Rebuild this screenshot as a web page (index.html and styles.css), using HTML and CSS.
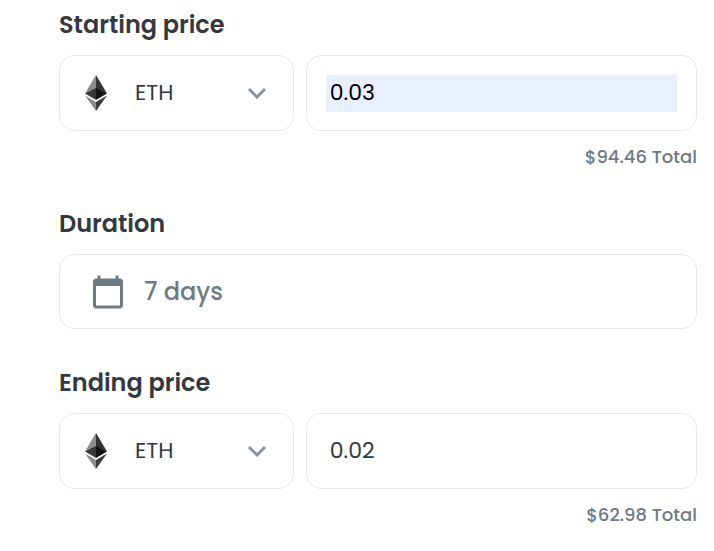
FILE: index.html
```html
<!DOCTYPE html>
<html lang="en">
<head>
    <meta charset="UTF-8">
    <meta name="viewport" content="width=device-width, initial-scale=1.0">
    <title>List item for sale</title>
    <link rel="stylesheet" href="styles.css">
</head>
<body>
    <form class="listing-form">
        <!-- Starting price -->
        <div class="field">
            <label class="field-label" for="startPrice">Starting price</label>
            <div class="price-row">
                <div class="box currency">
                    <svg class="eth-icon" viewBox="0 0 22 36" aria-hidden="true">
                        <path fill="#8c8c8c" d="M11 0 0 18.5 11 14z"/>
                        <path fill="#343434" d="M11 0v14l11 4.5z"/>
                        <path fill="#393939" d="M11 13 0 18.5 11 25z"/>
                        <path fill="#141414" d="M11 13v12l11-6.5z"/>
                        <path fill="#8c8c8c" d="M0 20.5 11 36v-9z"/>
                        <path fill="#3c3c3b" d="M11 27v9l11-15.5z"/>
                    </svg>
                    <select aria-label="Starting price currency">
                        <option>ETH</option>
                    </select>
                    <svg class="chevron" viewBox="0 0 20 12" aria-hidden="true">
                        <path d="M2 2l8 8 8-8"/>
                    </svg>
                </div>
                <div class="box amount">
                    <input class="autofilled" type="text" id="startPrice" value="0.03">
                </div>
            </div>
            <div class="total">$94.46 Total</div>
        </div>

        <!-- Duration -->
        <div class="field">
            <label class="field-label" for="duration">Duration</label>
            <button class="box duration" type="button" id="duration">
                <svg class="calendar-icon" viewBox="0 0 24 24" aria-hidden="true">
                    <path d="M20 3h-1V1h-2v2H7V1H5v2H4c-1.1 0-2 .9-2 2v16c0 1.1.9 2 2 2h16c1.1 0 2-.9 2-2V5c0-1.1-.9-2-2-2zm0 18H4V8h16v13z"/>
                </svg>
                <span>7 days</span>
            </button>
        </div>

        <!-- Ending price -->
        <div class="field">
            <label class="field-label" for="endPrice">Ending price</label>
            <div class="price-row">
                <div class="box currency">
                    <svg class="eth-icon" viewBox="0 0 22 36" aria-hidden="true">
                        <path fill="#8c8c8c" d="M11 0 0 18.5 11 14z"/>
                        <path fill="#343434" d="M11 0v14l11 4.5z"/>
                        <path fill="#393939" d="M11 13 0 18.5 11 25z"/>
                        <path fill="#141414" d="M11 13v12l11-6.5z"/>
                        <path fill="#8c8c8c" d="M0 20.5 11 36v-9z"/>
                        <path fill="#3c3c3b" d="M11 27v9l11-15.5z"/>
                    </svg>
                    <select aria-label="Ending price currency">
                        <option>ETH</option>
                    </select>
                    <svg class="chevron" viewBox="0 0 20 12" aria-hidden="true">
                        <path d="M2 2l8 8 8-8"/>
                    </svg>
                </div>
                <div class="box amount">
                    <input type="text" id="endPrice" value="0.02">
                </div>
            </div>
            <div class="total">$62.98 Total</div>
        </div>
    </form>
</body>
</html>
```
FILE: styles.css
```css
* {
    box-sizing: border-box;
}
body {
    margin: 0;
    background-color: #ffffff;
    font-family: 'Poppins', 'Inter', sans-serif;
    color: #353840;
}
.listing-form {
    display: flex;
    flex-direction: column;
    gap: 36px;
    padding: 7px 17px 7px 59px;
}
.field-label {
    display: block;
    margin-bottom: 12px;
    font-size: 24px;
    line-height: 36px;
    font-weight: 600;
}
.price-row {
    display: grid;
    grid-template-columns: 3fr 5fr;
    gap: 12px;
}
.box {
    display: flex;
    align-items: center;
    min-height: 76px;
    border: 1px solid #e5e8eb;
    border-radius: 15px;
    background-color: #ffffff;
}
.currency {
    padding: 0 26px 0 25px;
}
.eth-icon {
    flex: none;
    width: 22px;
    height: 36px;
}
.currency select {
    flex: 1;
    min-width: 0;
    margin-left: 28px;
    padding: 0;
    border: none;
    background: none;
    appearance: none;
    font-family: inherit;
    font-size: 22px;
    line-height: 36px;
    color: #353840;
    outline: none;
}
.chevron {
    flex: none;
    width: 20px;
    height: 12px;
    fill: none;
    stroke: #8a939b;
    stroke-width: 3;
}
.amount {
    padding: 0 19px;
}
.amount input {
    width: 100%;
    height: 37px;
    padding: 0 4px 2px;
    border: none;
    background: none;
    font-family: inherit;
    font-size: 22px;
    color: #353840;
    outline: none;
}
.amount .autofilled {
    background-color: #e8f0fe;
    color: #000000;
}
.total {
    margin-top: 13px;
    font-size: 18px;
    line-height: 26px;
    font-weight: 500;
    color: #707a83;
    text-align: right;
}
.duration {
    width: 100%;
    min-height: 75px;
    gap: 18px;
    padding: 0 30px;
    font-family: inherit;
    font-size: 24px;
    font-weight: 500;
    color: #707a83;
    cursor: pointer;
}
.calendar-icon {
    flex: none;
    width: 36px;
    height: 36px;
    fill: #707a83;
}
```
